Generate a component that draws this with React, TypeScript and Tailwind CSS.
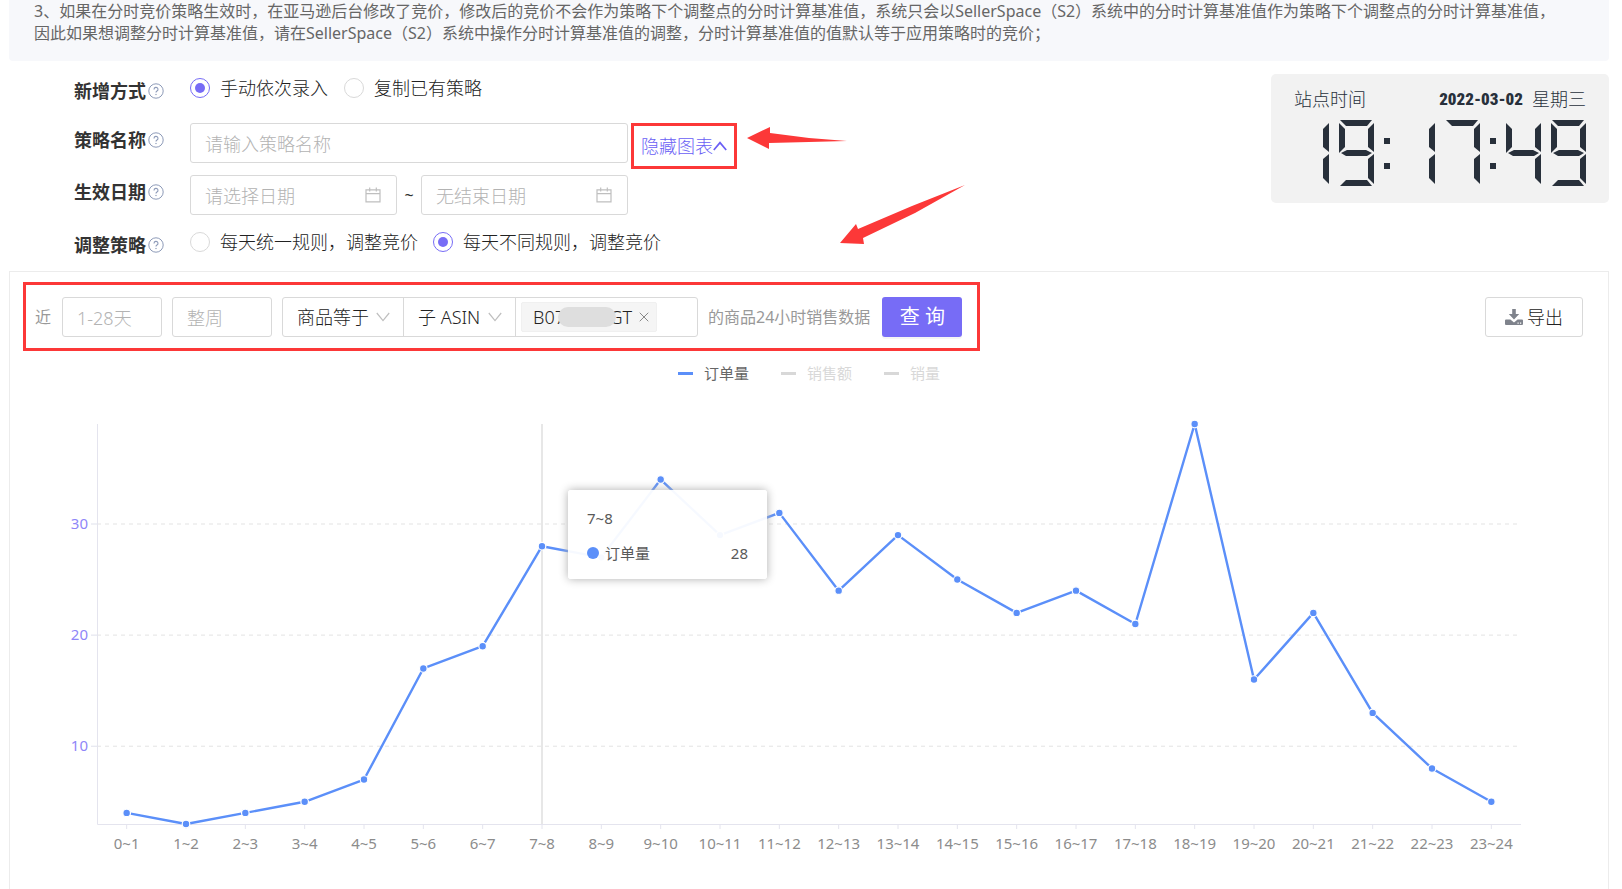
import type { ReactNode } from "react"
import { FiX } from "react-icons/fi"

const hours = [4, 3, 4, 5, 7, 17, 19, 28, 27, 34, 29, 31, 24, 29, 25, 22, 24, 21, 39, 16, 22, 13, 8, 5]
const ticks = [10, 20, 30]

// plot area, in viewBox units
const plot = { left: 87, right: 1511, top: 24, bottom: 424, min: 3, max: 39 }
const step = (plot.right - plot.left) / hours.length
const xAt = (i: number) => plot.left + step * (i + 0.5)
const yAt = (v: number) => plot.bottom - ((v - plot.min) / (plot.max - plot.min)) * (plot.bottom - plot.top)

const fieldClass =
  "h-10 rounded-[3px] border border-[#d9d9d9] bg-white px-[14px] pt-[2px] text-lg font-light text-[#222] outline-none placeholder:text-[#b3b3b3]"

// a top, b upper right, c lower right, d bottom, f upper left, g middle
const segments: Record<string, string> = {
  a: "1,0 33,0 28,6 7,6",
  b: "35,3 29,9 29,27 35,32",
  c: "35,34 29,39 29,58 35,64",
  d: "7,60 28,60 33,66 1,66",
  f: "0,3 6,9 6,27 0,33",
  g: "2,33 8,30 27,30 33,33 28,36 7,36",
}
const digits: Record<string, string> = { "1": "bc", "4": "bcfg", "7": "abc", "9": "abcdfg" }

function HelpIcon() {
  return (
    <svg viewBox="0 0 16 16" className="size-4" fill="none" stroke="#8d9ab8" aria-hidden="true">
      <circle cx="8" cy="8" r="7.2" />
      <path d="M6 6.4a2 2 0 1 1 3 1.7c-.7.4-1 .7-1 1.5" strokeWidth="1.1" />
      <circle cx="8" cy="11.5" r=".4" fill="#8d9ab8" strokeWidth=".6" />
    </svg>
  )
}

function CalendarIcon() {
  return (
    <svg viewBox="0 0 16 16" className="size-4" fill="none" stroke="#bfbfbf" strokeWidth="1.2" aria-hidden="true">
      <path d="M1 2.8h14v12H1zM1 6.6h14M4.7.5v4M11.3.5v4" />
    </svg>
  )
}

function Chevron({ up = false, className = "" }: { up?: boolean; className?: string }) {
  return (
    <svg viewBox="0 0 14 10" className={`h-[10px] w-[14px] ${className}`} fill="none" stroke="currentColor" aria-hidden="true">
      <path d={up ? "M.8 9 7 1.6 13.2 9" : "M.8 1 7 8.6 13.2 1"} strokeWidth={up ? 1.7 : 1.2} />
    </svg>
  )
}

function FormRow({ label, className, children }: { label: string; className: string; children: ReactNode }) {
  return (
    <div className={`flex items-start ${className}`}>
      <div className="flex w-[116px] shrink-0 items-center gap-[2px] pt-[5px] text-lg leading-6 font-bold text-[#333]">
        {label}
        <HelpIcon />
      </div>
      {children}
    </div>
  )
}

function Radio({ name, label, checked }: { name: string; label: string; checked?: boolean }) {
  return (
    <label className="flex h-7 items-center gap-[10px] text-lg font-light text-[#222]">
      <input
        type="radio"
        name={name}
        defaultChecked={checked}
        className="grid size-5 appearance-none place-items-center rounded-full border border-[#d9d9d9] before:size-[10px] before:rounded-full checked:border-[#776cf6] checked:before:bg-[#776cf6]"
      />
      {label}
    </label>
  )
}

function DateField({ label }: { label: string }) {
  return (
    <div className="relative w-[207px]">
      <input className={`${fieldClass} w-full`} placeholder={label} aria-label={label} />
      <span className="absolute top-3 right-4">
        <CalendarIcon />
      </span>
    </div>
  )
}

function Clock() {
  return (
    <section className="w-[338px] shrink-0 self-start rounded-[5px] bg-[#f2f2f2] px-[23px] pt-3 pb-[17px] text-[#28303b]">
      <div className="flex items-center text-lg leading-[26px] font-light">
        <span>站点时间</span>
        <span className="ml-auto font-['Impact','Roboto_Condensed','Open_Sans_Condensed','Roboto'] text-[17px] leading-[26px] font-black">
          2022-03-02
        </span>
        <span className="ml-[9px]">星期三</span>
      </div>
      <div className="mt-2 flex justify-between" role="img" aria-label="19:17:49">
        {"19:17:49".split("").map((char, i) =>
          char === ":" ? (
            <svg key={i} viewBox="0 0 6 66" className="h-[66px] w-[6px]" fill="currentColor">
              <path d="M0 18h6v6H0zM0 43h6v6H0z" />
            </svg>
          ) : (
            <svg key={i} viewBox="0 0 35 66" className="h-[66px] w-[35px]" fill="currentColor">
              {digits[char].split("").map((s) => (
                <polygon key={s} points={segments[s]} />
              ))}
            </svg>
          )
        )}
      </div>
    </section>
  )
}

function QueryBar() {
  return (
    <div className="flex items-center border-3 border-[#fc3838] pt-3 pr-[15px] pb-[11px] pl-[9px]">
      <span className="mr-[11px] text-base text-[#999]">近</span>
      <input className={`${fieldClass} w-[100px]`} placeholder="1-28天" aria-label="天数" />
      <input className={`${fieldClass} ml-[10px] w-[100px]`} placeholder="整周" aria-label="整周" />
      <div className="ml-[10px] flex h-10 rounded-[3px] border border-[#d9d9d9] font-light text-[#222]">
        <div className="relative w-[121px] border-r border-[#d9d9d9]">
          <select className="h-full w-full appearance-none pl-[14px] text-lg outline-none" aria-label="条件">
            <option>商品等于</option>
          </select>
          <Chevron className="pointer-events-none absolute top-[14px] right-[13px] text-[#bfbfbf]" />
        </div>
        <div className="relative w-[112px] border-r border-[#d9d9d9]">
          <select className="h-full w-full appearance-none pl-[14px] text-lg outline-none" aria-label="ASIN 类型">
            <option>子 ASIN</option>
          </select>
          <Chevron className="pointer-events-none absolute top-[14px] right-[13px] text-[#bfbfbf]" />
        </div>
        <div className="flex w-[181px] items-center pl-[5px]">
          <span className="flex h-[30px] w-[136px] shrink-0 items-center rounded-xs border border-[#f0f0f0] bg-[#f5f5f5] pr-1 pl-[11px] text-lg">
            B07
            <span className="z-10 -mx-[7px] h-5 grow rounded-full bg-[#dedede]" />
            GT
            <button className="ml-1 text-[#888]" aria-label="移除">
              <FiX className="size-4" strokeWidth={1.5} />
            </button>
          </span>
          <input className="h-full w-full min-w-0 outline-none" aria-label="ASIN" />
        </div>
      </div>
      <span className="ml-[10px] text-base text-[#999]">的商品24小时销售数据</span>
      <button className="ml-3 h-10 w-20 rounded-[3px] bg-[#776cf6] text-xl text-white shadow-[0_2px_0_rgba(0,0,0,0.04)]">
        查 询
      </button>
    </div>
  )
}

function Legend() {
  return (
    <div className="flex justify-center gap-8 text-[15px] leading-[22px]">
      {["订单量", "销售额", "销量"].map((name, i) => (
        <button key={name} className={`flex items-center gap-[11px] ${i === 0 ? "text-[#666]" : "text-[#d8d8d8]"}`}>
          <span className={`h-[3px] w-[15px] ${i === 0 ? "bg-[#5b8ff9]" : "bg-[#d8d8d8]"}`} />
          {name}
        </button>
      ))}
    </div>
  )
}

function Chart() {
  return (
    <div className="relative">
      <svg viewBox="0 0 1598 489" className="block w-full" fontSize="15">
        {ticks.map((v) => (
          <g key={v}>
            <path d={`M${plot.left} ${yAt(v)}H${plot.right}`} stroke="#e3e3e3" strokeDasharray="4 4" />
            <path d={`M${plot.left - 6} ${yAt(v)}H${plot.left}`} stroke="#dfe1ec" />
            <text x={plot.left - 9} y={yAt(v) + 5} textAnchor="end" fill="#8f86f8">
              {v}
            </text>
          </g>
        ))}
        <path d={`M${plot.left + 0.5} ${plot.top}V${plot.bottom + 0.5}H${plot.right}`} fill="none" stroke="#e4e4ee" />
        {hours.map((_, i) => (
          <g key={i}>
            <path d={`M${xAt(i)} ${plot.bottom}v5`} stroke="#e4e4ee" />
            <text x={xAt(i)} y={plot.bottom + 25} textAnchor="middle" fill="#8c8c8c">
              {`${i}~${i + 1}`}
            </text>
          </g>
        ))}
        <path d={`M${xAt(7)} ${plot.top}V${plot.bottom}`} stroke="#cfcfcf" />
        <polyline
          points={hours.map((v, i) => `${xAt(i)},${yAt(v)}`).join(" ")}
          fill="none"
          stroke="#5b8ff9"
          strokeWidth="2.4"
          strokeLinejoin="round"
        />
        {hours.map((v, i) => (
          <circle key={i} cx={xAt(i)} cy={yAt(v)} r="3.8" fill="#5b8ff9" stroke="#fff" strokeWidth="1.2" />
        ))}
      </svg>
      <div className="absolute top-[90px] left-[558px] w-[199px] rounded-[3px] bg-white/95 px-[19px] pt-[17px] pb-[15px] text-[15px] text-[#595959] shadow-[0_0_10px_#aeaeae]">
        <p className="leading-[22px]">7~8</p>
        <p className="mt-[13px] flex items-center leading-[22px]">
          <span className="mr-[6px] size-3 rounded-full bg-[#5b8ff9]" />
          订单量
          <span className="ml-auto">28</span>
        </p>
      </div>
    </div>
  )
}

export default function App() {
  return (
    <main className="relative bg-white pr-[13px] pl-[9px] font-['Noto_Sans','Noto_Sans_CJK_SC',sans-serif]">
      <div className="rounded-b-[4px] bg-[#f7f8fb] px-[25px] pb-[17px] text-base leading-[22px] text-[#666]">
        <p>
          3、如果在分时竞价策略生效时，在亚马逊后台修改了竞价，修改后的竞价不会作为策略下个调整点的分时计算基准值，系统只会以SellerSpace（S2）系统中的分时计算基准值作为策略下个调整点的分时计算基准值，
          <br />
          因此如果想调整分时计算基准值，请在SellerSpace（S2）系统中操作分时计算基准值的调整，分时计算基准值的值默认等于应用策略时的竞价；
        </p>
      </div>

      <div className="mt-[13px] flex justify-between pl-[65px]">
        <form>
          <FormRow label="新增方式" className="h-[49px]">
            <div className="flex gap-4">
              <Radio name="mode" label="手动依次录入" checked />
              <Radio name="mode" label="复制已有策略" />
            </div>
          </FormRow>
          <FormRow label="策略名称" className="h-[52px]">
            <input className={`${fieldClass} w-[438px]`} placeholder="请输入策略名称" aria-label="策略名称" />
            <button
              type="button"
              className="ml-[3px] flex h-[46px] w-[106px] items-center justify-center border-3 border-[#fc3838] text-lg font-light text-[#6a5ef5]"
            >
              隐藏图表
              <Chevron up />
            </button>
          </FormRow>
          <FormRow label="生效日期" className="h-[53px]">
            <div className="flex items-center text-lg text-[#333]">
              <DateField label="请选择日期" />
              <span className="w-6 text-center text-base">~</span>
              <DateField label="无结束日期" />
            </div>
          </FormRow>
          <FormRow label="调整策略" className="h-[43px]">
            <div className="flex gap-[15px]">
              <Radio name="rule" label="每天统一规则，调整竞价" />
              <Radio name="rule" label="每天不同规则，调整竞价" checked />
            </div>
          </FormRow>
        </form>
        <Clock />
      </div>

      {/* Annotation arrows */}
      <svg viewBox="0 0 220 118" className="pointer-events-none absolute top-[127px] left-[747px] h-[118px] w-[220px]" fill="#fc3838">
        <polygon points="0,11 23,0 23,6 62,11 100,14 62,15 22,16 22,22" />
        <polygon points="93,116 109,97 111,102 165,79 218,58 168,86 116,111 117,117" />
      </svg>

      <section className="border border-b-0 border-[#ececec]">
        <div className="flex items-start justify-between pt-[10px] pr-[25px] pl-[13px]">
          <QueryBar />
          <button className="mt-[15px] flex h-10 w-[98px] items-center justify-center gap-1 rounded-[3px] border border-[#d9d9d9] text-lg font-light text-[#222]">
            <svg viewBox="0 0 18 16" className="h-4 w-[18px]" fill="#7f838c" aria-hidden="true">
              <path d="M7.2 0h3.6v5h3.4L9 10.4 3.8 5h3.4z" />
              <path fillRule="evenodd" d="M1 10.5h4.4L9 13.6l3.6-3.1H17a1 1 0 0 1 1 1V15a1 1 0 0 1-1 1H1a1 1 0 0 1-1-1v-3.500a1 1 0 0 1 1-1zm11.500 3v1.200h1.200v-1.200zm2.500 0v1.200h1.200v-1.200z" />
            </svg>
            导出
          </button>
        </div>
        <div className="pt-[11px] pb-4">
          <Legend />
        </div>
        <Chart />
      </section>
    </main>
  )
}
